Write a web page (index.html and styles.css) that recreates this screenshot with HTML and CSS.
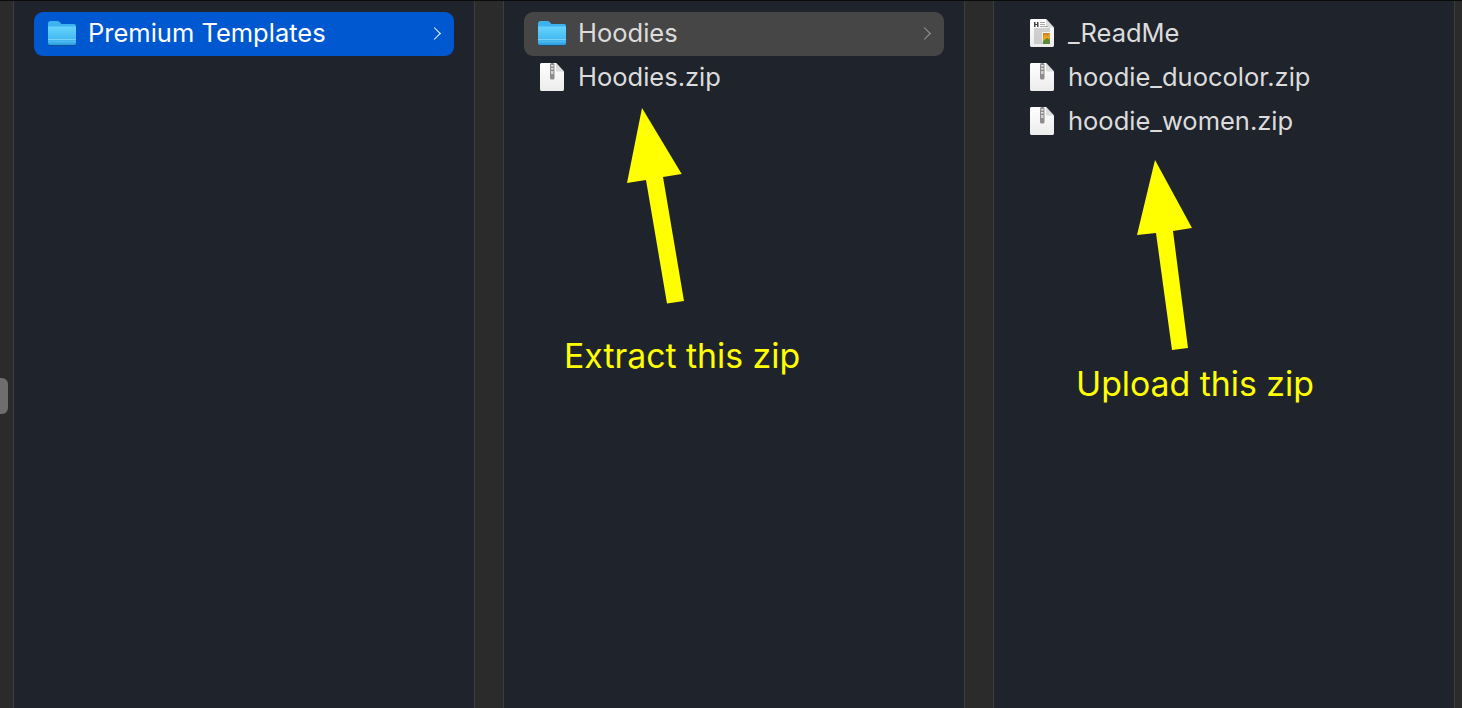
FILE: index.html
```html
<!DOCTYPE html>
<html lang="en">
<head>
  <meta charset="UTF-8" />
  <title>Finder columns</title>
  <link rel="stylesheet" href="styles.css">
</head>
<body>
  <svg class="defs" width="0" height="0">
    <defs>
      <linearGradient id="folderBody" x1="0" y1="0" x2="0" y2="1">
        <stop offset="0" stop-color="#66d3fc" />
        <stop offset="0.7" stop-color="#44baf2" />
        <stop offset="1" stop-color="#2f9fdf" />
      </linearGradient>
      <linearGradient id="paper" x1="0" y1="0" x2="0" y2="1">
        <stop offset="0" stop-color="#ffffff" />
        <stop offset="1" stop-color="#ececec" />
      </linearGradient>
      <symbol id="folder" viewBox="1 2 28 26">
        <path d="M1 5.500C1 4.100 2 3 3.400 3h7.200c.9 0 1.400.3 2 .9L14.500 6H27c1.200 0 2 .8 2 2v3H1z" fill="#3cb2ee" />
        <path d="M1 8.500h26.600c.8 0 1.400.6 1.400 1.400v15c0 1.200-.9 2.100-2.100 2.100H3.100C1.900 27 1 26.100 1 24.900z" fill="url(#folderBody)" />
        <rect x="1" y="21" width="28" height="1" fill="#8fdcfa" opacity="0.7" />
        <rect x="1" y="23.500" width="28" height="0.8" fill="#8fdcfa" opacity="0.4" />
        <rect x="1.500" y="27" width="27" height="1" fill="#0d4f80" opacity="0.7" />
      </symbol>
      <symbol id="zipfile" viewBox="0 0 24 28">
        <path d="M1.500 0H16l8 8.500v17.700c0 1-.8 1.800-1.800 1.800H1.800C.8 28 0 27.200 0 26.200V1.500C0 .7.700 0 1.500 0z" fill="url(#paper)" />
        <path d="M16 0l8 8.500h-6.400c-.9 0-1.600-.7-1.600-1.600z" fill="#dcdcdc" />
        <rect x="10" y="0" width="4.500" height="16.500" rx="1.500" fill="#8d8d8d" />
        <rect x="11" y="2" width="2.500" height="1.500" fill="#e2e2e2" />
        <rect x="11" y="5" width="2.500" height="1.500" fill="#e2e2e2" />
        <rect x="11" y="8" width="2.500" height="3" fill="#d0d0d0" />
      </symbol>
      <symbol id="docfile" viewBox="0 0 24 28">
        <path d="M1.500 0H16l8 8.500v17.700c0 1-.8 1.800-1.800 1.800H1.800C.8 28 0 27.200 0 26.200V1.500C0 .7.700 0 1.500 0z" fill="url(#paper)" />
        <path d="M16 0l8 8.500h-6.400c-.9 0-1.600-.7-1.600-1.600z" fill="#dcdcdc" />
        <path d="M4 3h1.500v5H4zM7 3h1.500v5H7zM5.500 5H7v1H5.500z" fill="#444" />
        <path d="M10 3.500h5M10 5.500h5M10 7.500h8M4 10h16M4 12h16M4 14h8M4 16h8M4 18h8M4 20h8M4 22h8M4 24h16" stroke="#a8a8a8" stroke-width="1.100" fill="none" />
        <rect x="13" y="14" width="7" height="11" fill="#c9822c" />
        <path d="M13 19l2-4 2 2 3-3v5l-3 3-4 1z" fill="#eaa21e" />
        <path d="M13 22l4-3 3 2v4h-7z" fill="#5d8a3a" />
      </symbol>
    </defs>
  </svg>

  <div class="top-edge"></div>

  <div class="browser">
    <div class="gutter gutter-first"></div>

    <div class="column">
      <div class="row selected">
        <svg class="folder-icon"><use href="#folder" /></svg>
        <span class="name">Premium Templates</span>
        <span class="chevron"></span>
      </div>
    </div>

    <div class="gutter"></div>

    <div class="column">
      <div class="row inactive">
        <svg class="folder-icon"><use href="#folder" /></svg>
        <span class="name">Hoodies</span>
        <span class="chevron"></span>
      </div>
      <div class="row">
        <svg class="file-icon"><use href="#zipfile" /></svg>
        <span class="name">Hoodies.zip</span>
      </div>
    </div>

    <div class="gutter"></div>

    <div class="column">
      <div class="row">
        <svg class="file-icon"><use href="#docfile" /></svg>
        <span class="name">_ReadMe</span>
      </div>
      <div class="row">
        <svg class="file-icon"><use href="#zipfile" /></svg>
        <span class="name">hoodie_duocolor.zip</span>
      </div>
      <div class="row">
        <svg class="file-icon"><use href="#zipfile" /></svg>
        <span class="name">hoodie_women.zip</span>
      </div>
    </div>

    <div class="gutter gutter-last"></div>
  </div>

  <!-- Scroll handle and yellow notes lie on top of the columns -->
  <div class="handle"></div>

  <svg class="arrows" width="1462" height="708">
    <polygon points="642,108 681.7,174 663,177 684,301 667,303.500 646,180 627,183" />
    <polygon points="1155,160 1192,228 1173,231 1188,348 1172,350 1156,233 1137,235" />
  </svg>
  <div class="note note-extract">Extract this zip</div>
  <div class="note note-upload">Upload this zip</div>
</body>
</html>
```

FILE: styles.css
```css
* {
  box-sizing: border-box;
  margin: 0;
  padding: 0;
}

html,
body {
  height: 100%;
  overflow: hidden;
}

body {
  position: relative;
  display: flex;
  flex-direction: column;
  background: #2b2b2b;
  font-family: Inter, 'Noto Sans', sans-serif;
}

.defs {
  position: absolute;
}

.top-edge {
  height: 1px;
  background: #0b0b0b;
}

.browser {
  flex: 1;
  display: flex;
}

.gutter {
  width: 30px;
  background: #2b2b2b;
  border-left: 1px solid #3d3d3d;
  border-right: 1px solid #3d3d3d;
}

.gutter-first {
  width: 14px;
  border-left: none;
}

.gutter-last {
  flex: 1;
  width: auto;
  border-right: none;
}

.column {
  width: 460px;
  padding: 11px 20px 0;
  background: #1f232c;
}

.row {
  height: 44px;
  display: flex;
  align-items: center;
  padding: 0 0 2px 14px;
  border-radius: 9px;
  color: #dcdcdc;
  font-size: 25.500px;
}

.selected {
  background: #0058d1;
  color: #fff;
}

.inactive {
  background: #464646;
}

.folder-icon {
  width: 28px;
  height: 26px;
  margin-right: 12px;
  flex: none;
}

.file-icon {
  width: 24px;
  height: 28px;
  margin: 0 14px 0 2px;
  flex: none;
}

.name {
  flex: 1;
  padding-bottom: 2px;
  white-space: nowrap;
}

.chevron {
  width: 9px;
  height: 9px;
  margin-right: 15px;
  border-top: 1.500px solid #fff;
  border-right: 1.500px solid #fff;
  transform: rotate(45deg);
}

.inactive .chevron {
  border-color: #9a9a9a;
}

.handle {
  position: absolute;
  left: 0;
  top: 378px;
  width: 8px;
  height: 36px;
  background: #6e6e6e;
  border-radius: 0 6px 6px 0;
}

.arrows {
  position: absolute;
  left: 0;
  top: 0;
  fill: #ffff00;
}

.note {
  position: absolute;
  color: #ffff00;
  font-size: 33.800px;
  line-height: 42px;
  white-space: nowrap;
}

.note-extract {
  left: 564px;
  top: 335px;
}

.note-upload {
  left: 1076px;
  top: 363px;
}
```
